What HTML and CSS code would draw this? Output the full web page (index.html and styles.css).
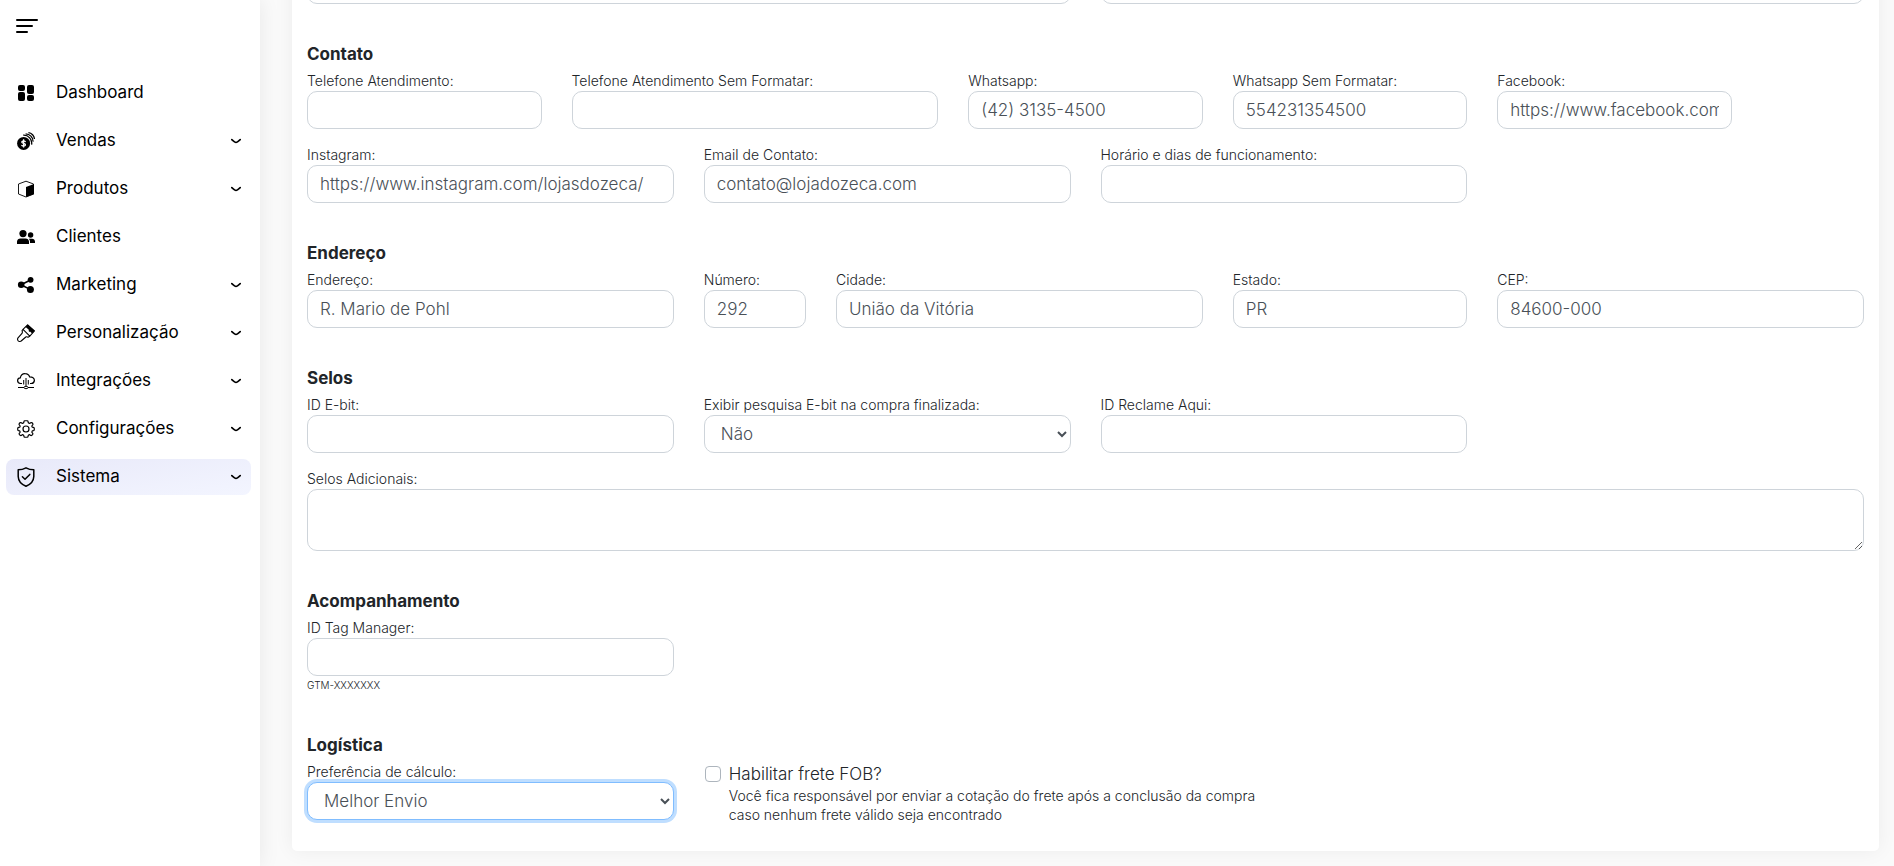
FILE: index.html
```html
<!DOCTYPE html>
<html lang="pt-BR">
<head>
<meta charset="utf-8">
<meta name="viewport" content="width=device-width, initial-scale=1">
<title>Configurações da loja</title>
<link rel="stylesheet" href="styles.css">
</head>
<body>
<svg class="defs" aria-hidden="true">
  <symbol id="chevron" viewBox="0 0 12 12"><path d="M1.800 4.700Q4.800 7.500 6 7.500Q7.200 7.500 10.200 4.700" fill="none" stroke="currentColor" stroke-width="1.700" stroke-linecap="round"/></symbol>
</svg>
<div class="page">
  <aside class="sidebar">
    <button class="toggle" type="button" aria-label="Menu">
      <svg width="22" height="14" viewBox="0 0 22 14"><path d="M1 1h20M1 7h15M1 13h10" stroke="currentColor" stroke-width="2" stroke-linecap="round"/></svg>
    </button>
    <nav class="menu">
      <a class="item" href="#"><svg class="icon" viewBox="0 0 18 18" fill="currentColor"><rect x="1" y="1" width="7" height="6" rx="2"/><rect x="1" y="8" width="7" height="9" rx="2"/><rect x="10" y="1" width="7" height="9" rx="2"/><rect x="10" y="11" width="7" height="6" rx="2"/></svg><span>Dashboard</span></a>
      <a class="item" href="#"><svg class="icon" viewBox="0 0 18 18" fill="none" stroke="currentColor"><circle cx="6.600" cy="11.400" r="6.500" fill="currentColor" stroke="none"/><path d="M6.200 3.200A8 8 0 0 1 14.600 12.600M8.600 1.800A7.500 7.500 0 0 1 16 9.600M11.400.7A6.500 6.500 0 0 1 17.400 7" stroke-width="1.300"/><path d="M8.700 9.700Q6.600 8.200 5 9.400Q4.300 11 6.600 11.400Q9 11.900 8.200 13.400Q6.600 14.700 4.400 13.200M6.600 7.200v8.400" stroke="#fff" stroke-width="1.300"/></svg><span>Vendas</span><svg class="chevron"><use href="#chevron"/></svg></a>
      <a class="item" href="#"><svg class="icon" viewBox="0 0 18 18"><path d="M9 1.200L16.500 4v10L9 17L1.500 14V4Z" fill="none" stroke="currentColor" stroke-width=".9" stroke-linejoin="round"/><path d="M9 7L17 4v10.200L9 17Z" fill="currentColor"/></svg><span>Produtos</span><svg class="chevron"><use href="#chevron"/></svg></a>
      <a class="item" href="#"><svg class="icon" viewBox="0 0 18 18" fill="currentColor"><circle cx="6" cy="5.600" r="3.600"/><circle cx="13.600" cy="7" r="2.700"/><path d="M0 16v-2.400Q.4 10.400 3.500 10.400h5Q11.600 10.400 12 13.600V16ZM13 16v-2.600Q12.900 11.800 11.800 10.800H15Q17.800 11 18 13.600V15h-5Z"/></svg><span>Clientes</span></a>
      <a class="item" href="#"><svg class="icon" viewBox="0 0 18 18" fill="currentColor"><path d="M13.500 4L4 8.800L13.500 13.600" fill="none" stroke="currentColor" stroke-width="1.600"/><circle cx="13.600" cy="3.800" r="2.900"/><circle cx="4.200" cy="8.800" r="3.300"/><circle cx="13.400" cy="13.400" r="3.500"/></svg><span>Marketing</span><svg class="chevron"><use href="#chevron"/></svg></a>
      <a class="item" href="#"><svg class="icon" viewBox="0 0 18 18" fill="none" stroke="currentColor" stroke-linejoin="round"><path d="M6 5.400L12.800 12.200L11 13.200Q9.800 12.400 8.800 13L4.200 17Q2.600 18 1.200 16.800Q0 15.400 1 13.900L5 9.400Q5.800 8 5 6.800ZM6 5.400L10.600.8L17.400 7L12.800 12.200" stroke-width="1.100"/><path d="M8.600 3L10.800.4L17.700 6.800L15.200 9.600L13 7.400L12 8L11.600 5.600Z" fill="currentColor" stroke="none"/></svg><span>Personalização</span><svg class="chevron"><use href="#chevron"/></svg></a>
      <a class="item" href="#"><svg class="icon" viewBox="0 0 18 18" fill="none" stroke="currentColor"><path d="M5 11.500H3.500Q.6 11.100.6 8.400Q.8 5.800 3.300 5.800Q4.200 1.400 8.200 1.600Q11.500 1.600 12.600 4.800Q17.400 5 17.400 8.400Q17.200 11.400 14.200 11.500H13" stroke-width="1.200"/><path d="M9 6v8M6.700 8v4.500M11.300 8v4.500M1 15.500h6M11 15.500h6M7 15.500a2 1.200 0 1 0 4 0a2 1.200 0 1 0-4 0"/></svg><span>Integrações</span><svg class="chevron"><use href="#chevron"/></svg></a>
      <a class="item" href="#"><svg class="icon" viewBox="0 0 24 24" fill="none" stroke="currentColor" stroke-width="1.600" stroke-linejoin="round"><circle cx="12" cy="12" r="4"/><path d="M10 1h4l.7 3q1.300.4 2.400 1l2.700-1.600l2.800 2.800L21 8.900q.6 1.100.9 2.300" stroke="none"/><path d="M10.300 1h3.400Q14.600 1 14.700 2.200Q14.900 4 16 4.400Q17.100 4.800 18.300 3.700Q19.200 3 20 3.700L21 4.700Q21.700 5.500 20.900 6.500Q19.400 8 19.900 9Q20.300 9.900 21.900 9.900Q23 10 23 11v2Q23 14 21.900 14.100Q20.300 14.200 19.900 15.200Q19.400 16.200 20.800 17.600Q21.600 18.500 20.900 19.300L19.600 20.500Q18.800 21.200 17.900 20.400Q16.800 19.300 15.800 19.800Q14.900 20.200 14.700 21.900Q14.600 23 13.600 23H10.400Q9.400 23 9.300 21.900Q9.100 20.200 8.200 19.800Q7.200 19.300 6.100 20.400Q5.200 21.200 4.400 20.500L3.100 19.300Q2.400 18.500 3.200 17.600Q4.600 16.200 4.100 15.200Q3.700 14.200 2.100 14.100Q1 14 1 13V11Q1 10 2.100 9.900Q3.700 9.900 4.100 9Q4.600 8 3.100 6.500Q2.300 5.500 3 4.700L4 3.700Q4.800 3 5.700 3.700Q6.900 4.800 8 4.400Q9.100 4 9.300 2.200Q9.400 1 10.300 1Z"/></svg><span>Configurações</span><svg class="chevron"><use href="#chevron"/></svg></a>
      <a class="item active" href="#"><svg class="icon tall" viewBox="0 0 18 20" fill="none" stroke="currentColor" stroke-width="1.500" stroke-linejoin="round" stroke-linecap="round"><path d="M9 .8Q12.500 2.800 16.800 2.800V9.500Q16.600 16.200 9 19.200Q1.400 16.200 1.200 9.500V2.800Q5.500 2.800 9 .8Z"/><path d="M5.400 9.800L8 12.300L12.800 7.400"/></svg><span>Sistema</span><svg class="chevron"><use href="#chevron"/></svg></a>
    </nav>
  </aside>
  <main class="content">
    <form class="card">
      <section class="section">
        <div class="row">
          <input class="control w6" type="text" aria-label="Dados da loja">
          <input class="control w6" type="text" aria-label="Dados adicionais">
        </div>
      </section>
      <section class="section">
        <h2>Contato</h2>
        <div class="row">
          <div class="field w2"><label for="tel">Telefone Atendimento:</label><input class="control" id="tel" type="text"></div>
          <div class="field w3"><label for="tel2">Telefone Atendimento Sem Formatar:</label><input class="control" id="tel2" type="text"></div>
          <div class="field w2"><label for="wpp">Whatsapp:</label><input class="control" id="wpp" type="text" value="(42) 3135-4500"></div>
          <div class="field w2"><label for="wpp2">Whatsapp Sem Formatar:</label><input class="control" id="wpp2" type="text" value="554231354500"></div>
          <div class="field w2"><label for="fb">Facebook:</label><input class="control" id="fb" type="text" value="https://www.facebook.com/"></div>
        </div>
        <div class="row">
          <div class="field w3"><label for="ig">Instagram:</label><input class="control" id="ig" type="text" value="https://www.instagram.com/lojasdozeca/"></div>
          <div class="field w3"><label for="mail">Email de Contato:</label><input class="control" id="mail" type="text" value="contato@lojadozeca.com"></div>
          <div class="field w3"><label for="hours">Horário e dias de funcionamento:</label><input class="control" id="hours" type="text"></div>
        </div>
      </section>
      <section class="section">
        <h2>Endereço</h2>
        <div class="row">
          <div class="field w3"><label for="street">Endereço:</label><input class="control" id="street" type="text" value="R. Mario de Pohl"></div>
          <div class="field w1"><label for="num">Número:</label><input class="control" id="num" type="text" value="292"></div>
          <div class="field w3"><label for="city">Cidade:</label><input class="control" id="city" type="text" value="União da Vitória"></div>
          <div class="field w2"><label for="state">Estado:</label><input class="control" id="state" type="text" value="PR"></div>
          <div class="field w3"><label for="cep">CEP:</label><input class="control" id="cep" type="text" value="84600-000"></div>
        </div>
      </section>
      <section class="section">
        <h2>Selos</h2>
        <div class="row">
          <div class="field w3"><label for="ebit">ID E-bit:</label><input class="control" id="ebit" type="text"></div>
          <div class="field w3"><label for="ebitq">Exibir pesquisa E-bit na compra finalizada:</label><select class="control" id="ebitq"><option>Não</option><option>Sim</option></select></div>
          <div class="field w3"><label for="ra">ID Reclame Aqui:</label><input class="control" id="ra" type="text"></div>
        </div>
        <div class="row">
          <div class="field w12"><label for="seals">Selos Adicionais:</label><textarea class="control" id="seals" rows="2"></textarea></div>
        </div>
      </section>
      <section class="section">
        <h2>Acompanhamento</h2>
        <div class="row">
          <div class="field w3"><label for="gtm">ID Tag Manager:</label><input class="control" id="gtm" type="text"><small>GTM-XXXXXXX</small></div>
        </div>
      </section>
      <section class="section">
        <h2>Logística</h2>
        <div class="row">
          <div class="field w3"><label for="calc">Preferência de cálculo:</label><select class="control focused" id="calc"><option>Melhor Envio</option></select></div>
          <div class="check w5">
            <input type="checkbox" id="fob">
            <div><label for="fob">Habilitar frete FOB?</label><p>Você fica responsável por enviar a cotação do frete após a conclusão da compra caso nenhum frete válido seja encontrado</p></div>
          </div>
        </div>
      </section>
    </form>
  </main>
</div>
</body>
</html>
```
FILE: styles.css
```css
* { box-sizing: border-box; }
body {
  margin: 0;
  background: #fafafa;
  color: #212529;
  font: 300 17px/24px Inter, "Open Sans", sans-serif;
}
.defs { position: absolute; width: 0; height: 0; }
.page { display: flex; height: 100vh; overflow: hidden; }
.sidebar {
  flex: 0 0 260px;
  padding: 19px 9px 0 6px;
  background: #fff;
  box-shadow: 0 0 20px rgba(0, 0, 0, .08);
}
.toggle {
  display: block;
  height: 14px;
  margin: 0 0 42px 10px;
  padding: 0;
  border: 0;
  background: none;
  color: #000;
}
.toggle svg { display: block; }
.menu { display: flex; flex-direction: column; gap: 12px; }
.item {
  display: flex;
  align-items: center;
  height: 36px;
  padding: 0 9px 0 11px;
  border-radius: 8px;
  color: #000;
  font-weight: 400;
  text-decoration: none;
}
.item span { flex: 1; margin: 0 0 2px 21px; }
.item.active { background: linear-gradient(170deg, #e8e9f9, #f3f5ff); }
.icon { width: 18px; height: 18px; }
.icon.tall { height: 20px; }
.chevron { width: 12px; height: 12px; }
.content { flex: 1; min-width: 0; padding: 0 15px 0 32px; }
.card {
  margin-top: -34px;
  padding: 0 15px 27px;
  border-radius: 5px;
  background: #fff;
  box-shadow: 0 0 20px rgba(0, 0, 0, .06);
}
.section + .section { padding-top: 38px; }
h2 { margin: 0 0 4px; font-size: 17px; line-height: 24px; font-weight: 700; }
.row {
  display: grid;
  grid-template-columns: repeat(12, minmax(0, 1fr));
  column-gap: 30px;
}
.row + .row { margin-top: 15px; }
.w1 { grid-column: span 1; }
.w2 { grid-column: span 2; }
.w3 { grid-column: span 3; }
.w5 { grid-column: span 5; }
.w6 { grid-column: span 6; }
.w12 { grid-column: span 12; }
.field label {
  display: block;
  padding-top: 1px;
  font-size: 14px;
  line-height: 20px;
  white-space: nowrap;
}
.control {
  display: block;
  width: 100%;
  height: 38px;
  padding: 6px 12px;
  border: 1px solid #ced4da;
  border-radius: 10px;
  background: #fff;
  color: #495057;
  font: inherit;
}
textarea.control { height: 62px; resize: vertical; }
.focused { border-color: #80bdff; box-shadow: 0 0 0 3px #bfdeff; outline: 0; }
small { display: block; font-size: 10px; line-height: 19px; }
.check { display: flex; gap: 8px; padding: 1px 0 0 1px; }
.check input {
  flex: none;
  width: 16px;
  height: 16px;
  margin: 4px 0;
  border: 1px solid #adb5bd;
  border-radius: 4px;
  background: #fff;
  appearance: none;
}
.check label { display: block; }
.check p { max-width: 550px; margin: 0; font-size: 14px; line-height: 19px; }
```
